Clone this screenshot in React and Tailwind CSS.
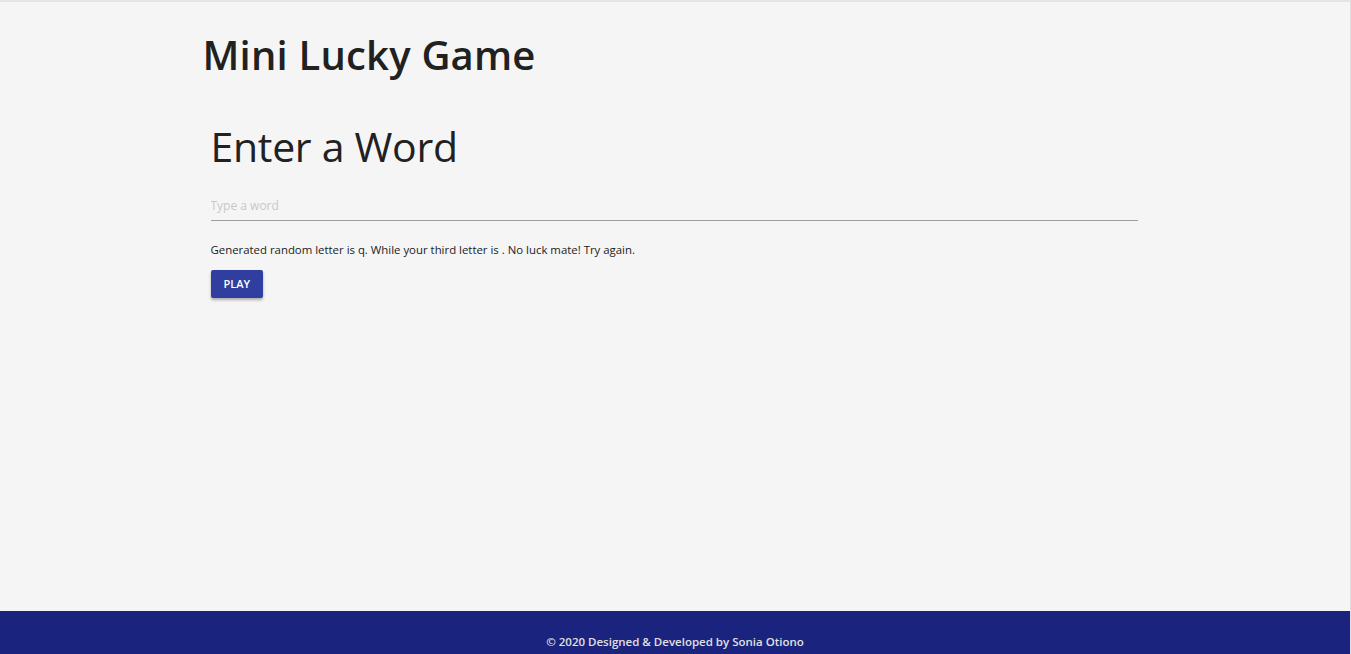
import React, { useState } from 'react';

export default function App() {
  const [word, setWord] = useState('');

  return (
    <div className="h-[654px] flex flex-col bg-[#f5f5f5] border-t-2 border-t-[#e4e4e4] border-r border-r-[#e0e0e0]" style={{ fontFamily: '"Open Sans", "Noto Sans", sans-serif' }}>
      <main className="flex-1">
        <div className="w-[70%] mx-auto">
          <h1 className="text-[40px] font-semibold text-[#212121] leading-[1.1] pt-[31px] tracking-[0.2px]">
            Mini Lucky Game
          </h1>

          <div className="pl-[8px] pr-[10px] mt-[47px]">
            <h3 className="text-[41px] font-normal text-[#212121] leading-[1.1] tracking-[-0.3px]">Enter a Word</h3>

            <input
              type="text"
              value={word}
              onChange={(e) => setWord(e.target.value)}
              placeholder="Type a word"
              className="mt-[22px] w-full h-[30px] bg-transparent border-b border-[#9e9e9e] text-[12px] text-[#212121] placeholder:text-[#c8c8c8] outline-none"
            />

            <p className="mt-[20px] text-[11.4px] text-[#212121]">
              Generated random letter is q. While your third letter is . No luck mate! Try again.
            </p>

            <button className="mt-[12px] h-[28px] px-[13px] bg-[#303f9f] text-white text-[11px] font-semibold rounded-[2px] shadow-[0_2px_3px_rgba(0,0,0,0.3)]">
              PLAY
            </button>
          </div>
        </div>
      </main>

      <footer className="h-[43px] bg-[#1a237e] flex items-end justify-center pb-[4px]">
        <span className="text-[11.5px] font-semibold text-[#e0e0e0]">© 2020 Designed &amp; Developed by Sonia Otiono</span>
      </footer>
    </div>
  );
}
